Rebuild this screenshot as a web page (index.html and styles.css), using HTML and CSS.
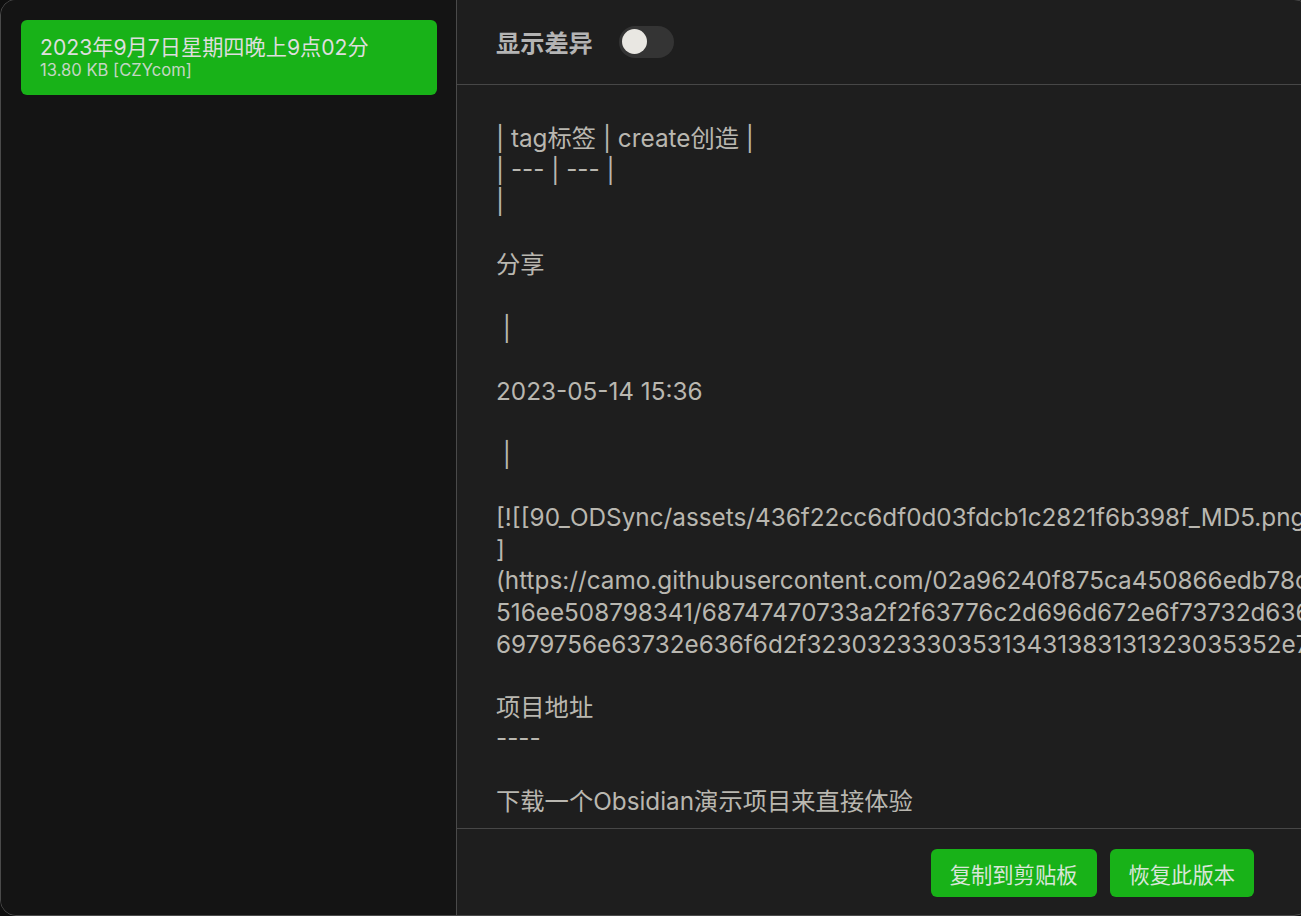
FILE: index.html
```html
<!DOCTYPE html>
<html lang="zh">
<head>
<meta charset="utf-8">
<title>版本历史</title>
<link rel="stylesheet" href="styles.css">
</head>
<body>
<div class="modal">
  <aside class="sidebar">
    <div class="version-card">
      <div class="version-title">2023年9月7日星期四晚上9点02分</div>
      <div class="version-meta">13.80 KB [CZYcom]</div>
    </div>
  </aside>
  <section class="main">
    <header class="header">
      <span class="header-label">显示差异</span>
      <span class="toggle"><span class="toggle-knob"></span></span>
    </header>
    <div class="content">| tag标签 | create创造 |
| --- | --- |
|

分享

 |

2023-05-14 15:36

 |

[![[90_ODSync/assets/436f22cc6df0d03fdcb1c2821f6b398f_MD5.png]
]
(https://camo.githubusercontent.com/02a96240f875ca450866edb78c4b1fe3e2d9c9e1
516ee508798341/68747470733a2f2f63776c2d696d672e6f73732d636e2d
6979756e63732e636f6d2f323032333035313431383131323035352e706e67)

项目地址
----

下载一个Obsidian演示项目来直接体验</div>
    <footer class="footer">
      <button class="btn">复制到剪贴板</button>
      <button class="btn">恢复此版本</button>
    </footer>
  </section>
</div>
</body>
</html>
```

FILE: styles.css
```css
html, body {
  margin: 0;
  padding: 0;
}
body {
  width: 1301px;
  height: 916px;
  overflow: hidden;
  background: #0f0f0f;
  font-family: Inter, "Noto Sans CJK SC", sans-serif;
}
.modal {
  box-sizing: border-box;
  width: 1310px;
  height: 917px;
  margin-top: -1px;
  display: flex;
  border: 1px solid #4a4a4a;
  border-radius: 16px;
  overflow: hidden;
  background: #1e1e1e;
}
.sidebar {
  flex: 0 0 456px;
  box-sizing: border-box;
  background: #141414;
  border-right: 1px solid #4a4a4a;
  padding: 20px 19px 0 20px;
}
.version-card {
  height: 75px;
  box-sizing: border-box;
  background: #18b218;
  border-radius: 6px;
  padding: 0 19px;
  display: flex;
  flex-direction: column;
  justify-content: center;
}
.version-title {
  font-size: 21.2px;
  line-height: 25px;
  color: #dedede;
}
.version-meta {
  font-size: 16.6px;
  line-height: 20px;
  color: #c4d6c4;
}
.main {
  flex: 1;
  display: flex;
  flex-direction: column;
  min-width: 0;
}
.header {
  height: 85px;
  box-sizing: border-box;
  flex: 0 0 auto;
  border-bottom: 1px solid #474747;
  display: flex;
  align-items: center;
  gap: 26px;
  padding: 0 0 1px 39px;
}
.header-label {
  font-size: 24.2px;
  font-weight: 700;
  color: #b4b4b4;
}
.toggle {
  width: 55px;
  height: 32px;
  border-radius: 16px;
  background: #343434;
  display: flex;
  align-items: center;
  padding-left: 3px;
  box-sizing: border-box;
}
.toggle-knob {
  width: 25px;
  height: 25px;
  border-radius: 50%;
  background: #e9e7e2;
}
.content {
  flex: 1;
  min-height: 0;
  overflow: hidden;
  padding: 38px 39px 0;
  white-space: pre;
  font-size: 24.3px;
  line-height: 31.6px;
  color: #b9b7b0;
}
.footer {
  flex: 0 0 auto;
  height: 87px;
  box-sizing: border-box;
  border-top: 1px solid #474747;
  display: flex;
  justify-content: flex-end;
  align-items: flex-start;
  gap: 13px;
  padding: 20px 55px 0 0;
}
.btn {
  height: 48px;
  padding: 0 19px;
  border: none;
  border-radius: 6px;
  background: #18b218;
  color: #d8e6d8;
  font-family: Inter, "Noto Sans CJK SC", sans-serif;
  font-size: 21.3px;
  cursor: pointer;
}
```
